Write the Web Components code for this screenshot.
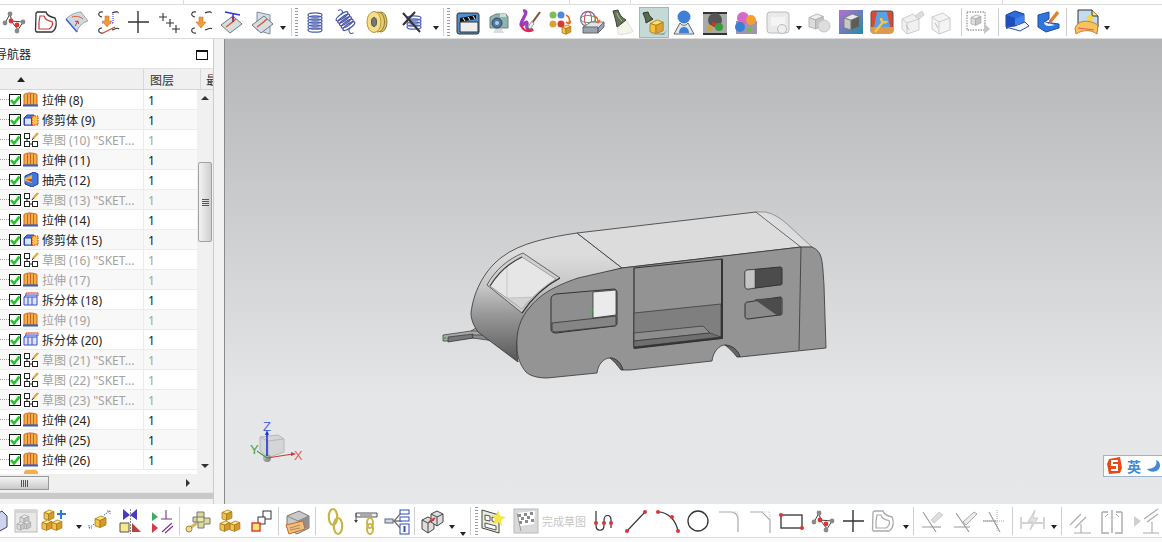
<!DOCTYPE html>
<html lang="zh"><head><meta charset="utf-8"><title>NX</title>
<style>html,body{margin:0;padding:0;width:1162px;height:542px;overflow:hidden;background:#f5f6f7;font:12px "Noto Sans","Noto Sans CJK SC",sans-serif}</style>
</head><body>
<app-shell></app-shell>
<script>
const cube=(x,y,s,c1='#ffe680',c2='#f3c24a',c3='#d89a26',st='#a77a20')=>{const h=s*.45;return `<g stroke="${st}" stroke-width=".8" stroke-linejoin="round"><path d="M${x} ${y+h/1.6}L${x+s*.6} ${y}L${x+s*1.1} ${y+h/2.4}L${x+s*.5} ${y+h}Z" fill="${c1}"/><path d="M${x} ${y+h/1.6}L${x+s*.5} ${y+h}V${y+h+s*.7}L${x} ${y+h/1.6+s*.7}Z" fill="${c2}"/><path d="M${x+s*.5} ${y+h}L${x+s*1.1} ${y+h/2.4}V${y+h/2.4+s*.7}L${x+s*.5} ${y+h+s*.7}Z" fill="${c3}"/></g>`};
const gcube=(x,y,s)=>cube(x,y,s,'#efefef','#dcdcdc','#c4c4c4','#aaa');
const ball=(x,y,r,c)=>`<circle cx="${x}" cy="${y}" r="${r}" fill="${c}"/>`;
const dots=(pts,c='#d33',r=2)=>pts.map(p=>ball(p[0],p[1],r,c)).join('');
const heart=(c1,c2)=>`<path d="M4 5C4 4 5 3 6 3L14 3C15 7 19 8 23 9C25 13 25 20 20 23L5 23C4 23 3.500 22 3.500 21Z" fill="none" stroke="${c1}" stroke-width="1.300"/><path d="M8 7L12 7C13 10 16 12 20 12.500C21 15 20 18 17 20L7 20L7 13Z" fill="none" stroke="${c2}" stroke-width="1.200"/>`;
const tile=`<path d="M3 16L15 7L24 15L12 24Z" fill="#d8dde0" stroke="#6d7c88"/><path d="M8 18C12 15 15 13 18 10" stroke="#e0552a" stroke-width="1.3" fill="none"/>`;
const coil=(x,y,n,st='#4a5fb0')=>{let s='';for(let i=0;i<n;i++)s+=`<ellipse cx="${x}" cy="${y+i*3}" rx="7" ry="2.2" fill="none" stroke="${st}" stroke-width="1.3"/>`;return s};
const sk=`<path d="M9 3C4 2 3 7 8 8M9 24C4 25 3 19 8 19M18 4C22 2 25 3 24 4M18 21C21 20 24 18 25 20" fill="none" stroke="#333" stroke-width="1.1"/>`;
const arrow=(x,y)=>`<path d="M${x-2} ${y}h4v5h3l-5 6l-5-6h3z" fill="#f09a3a" stroke="#c9661c" stroke-width=".5"/>`;
const ICONS={
nodes:`<path d="M4 14L9 5L11 13L17 21L22 13L10 12" fill="none" stroke="#444"/>`+dots([[9,5],[4,14],[16,22],[22,13]],'#888',2.4)+dots([[10,12],[16,16]],'#d33',2.4),
heart:heart('#333','#d4343a'),
surf:`<path d="M3 10C8 5 14 3 18 3L25 12C20 13 15 18 14 23C10 18 6 14 3 10Z" fill="#cfd9df" stroke="#9aa6ad"/><path d="M3 10C6 14 10 18 14 23" stroke="#3e5ed8" stroke-width="1.4" fill="none"/><path d="M9 8C13 7 16 7 20 10" stroke="#e5562a" fill="none"/><path d="M12 17l3-5M15 12l-3 .5M15 12l.5 3" stroke="#d4343a" fill="none"/>`,
curvearrow:sk+`<path d="M19 5V15" stroke="#33f" stroke-dasharray="1 1"/><path d="M8 14H19" stroke="#33f" stroke-dasharray="1 1"/><path d="M9 24L21 18" stroke="#e0352a" stroke-width="1.2"/>`+arrow(13,7),
plus:`<path d="M13 2V24M3 13H24" stroke="#333" stroke-width="1.4"/>`,
plus3:`<path d="M8 4V12M4 8H12M15 10V18M11 14H19M21 16V24M17 20H25" stroke="#333" stroke-width="1.1"/>`,
curvearrow2:sk+arrow(14,8),
tilet:tile+`<path d="M7 3L22 6M15 4.5V13" stroke="#2f36d6" stroke-width="1.4"/><path d="M15 11l-2-3h4z" fill="#c22"/>`,
tile2:`<path d="M8 3L21 6V25L8 21Z" fill="#d9dee6" stroke="#7f8ea3"/>`+tile,
coil:coil(13,6,6),
spring:`<g transform="rotate(-35 13 13)"><path d="M13 -1C18 -1 17 4 13 4" stroke="#3e5ed8" fill="none"/>${coil(13,6,5,'#4b55a8')}<path d="M13 20C8 22 10 27 13 26" stroke="#3e5ed8" fill="none"/></g>`,
roll:`<ellipse cx="17" cy="13" rx="6" ry="10" fill="#d8bf62" stroke="#8f7b35"/><ellipse cx="14" cy="13" rx="6.500" ry="10" fill="#ead174" stroke="#8f7b35"/><ellipse cx="10" cy="13" rx="7" ry="10.500" fill="#f4de88" stroke="#b5973a"/><ellipse cx="10" cy="13" rx="2.500" ry="4.500" fill="#777" stroke="#555"/>`,
coilx:coil(14,9,4,'#5264b8')+`<path d="M3 4L20 23M15 3L3 16" stroke="#333" stroke-width="2"/>`,
clap:`<rect x="3" y="4" width="22" height="21" rx="2" fill="#4d8fd0" stroke="#333"/><path d="M6 13H24V23H6Z" fill="#eee" stroke="#333"/><path d="M6 9L22 6V10L6 13Z" fill="#111"/><path d="M9 9l2 3M14 8l2 3M19 7l2 3" stroke="#fff"/>`,
camera:`<path d="M5 8L11 5H21L23 8V19H5Z" fill="#8fb3ad" stroke="#6c8580"/><circle cx="12" cy="14" r="5" fill="#4a79a8" stroke="#445"/><circle cx="12" cy="14" r="2" fill="#bcd"/><rect x="15" y="5" width="6" height="3" fill="#cdd"/><path d="M10 20H17L19 24H8Z" fill="#ddd"/>`,
ribbon:`<path d="M7 2C15 1 4 12 5 16C6 19 12 8 11 16C10 20 13 23 17 20" fill="none" stroke="#9d3bc2" stroke-width="3.2"/><path d="M5 16C6 20 10 24 17 21" fill="none" stroke="#e5264b" stroke-width="2.2"/><path d="M24 3L16 14" stroke="#7a5330" stroke-width="2"/><path d="M16 12L18 15L14 20L12 18Z" fill="#eee" stroke="#8a6"/>`,
balls:ball(6,6,3.5,'#7dc05a')+ball(14,6,3.5,'#4f87d6')+ball(6,15,3.5,'#d8a13d')+ball(14,15,3.5,'#d43c3c')+`<path d="M19 6C23 8 23 11 22 14M22 15l-3-2M22 15l2-3" stroke="#e86a2a" stroke-width="1.6" fill="none"/>`+cube(15,16,8),
wire:`<circle cx="9" cy="10" r="7.500" fill="none" stroke="#7d6fb0" stroke-width="1.300"/><ellipse cx="9" cy="10" rx="7.500" ry="3.500" fill="none" stroke="#4ca36a"/><ellipse cx="9" cy="10" rx="3.500" ry="7.500" fill="none" stroke="#d0465a"/><path d="M4 18L12 13H25L19 19Z" fill="#dfe3e8" stroke="#777"/><path d="M4 18H19V24H4ZM19 19L25 13V18L19 24Z" fill="#9aa3ad" stroke="#667"/><path d="M14 7C18 7 19 9 19 13M19 14l-3-2M19 14l2-3" stroke="#e86a2a" stroke-width="1.400" fill="none"/>`,
spot:`<path d="M9 18L17 11L24 22C20 25 12 26 9 25Z" fill="#f6f6e8" stroke="#ddd"/><path d="M4 2L9 1C10 5 13 9 17 11L8 18C7 11 5 6 4 2Z" fill="#66745a" stroke="#3a4433"/><path d="M8 4C9 8 11 10 13 12" stroke="#b8c4a0" fill="none"/>`,
lampcube:`<path d="M2 4L7 3C8 6 9 8 12 10L5 14C5 10 3 7 2 4Z" fill="#5a6d42" stroke="#333"/><path d="M6 15L13 11L12 15Z" fill="#f3ef9a"/>`+cube(9,11,12,'#ffe060','#f6c23e','#e0a030')+`<path d="M8 25L23 26L26 21L23 24Z" fill="#8fa5a0"/>`,
person:ball(13,8,6.5,'#3f7fd5')+`<path d="M9 14C11 17 15 17 17 14L23 25H3Z" fill="#dfe5ea" stroke="#666"/><path d="M8 24C8 16 18 16 18 24Z" fill="#3f7fd5"/>`,
darkbox:`<rect x="1" y="3" width="24" height="23" fill="#a9aaa8"/><rect x="1" y="3" width="24" height="2" fill="#333"/><rect x="1" y="24" width="24" height="2" fill="#333"/><circle cx="13" cy="11" r="7" fill="#555"/>`+ball(8,19,3,'#c9a23a')+ball(12,15,2.2,'#c33')+ball(17,18,4,'#3c9a3c'),
colorballs:`<path d="M4 12H25V25H4Z" fill="#a094b5"/>`+ball(11,9,6,'#d568c8')+ball(19,11,5,'#f0a030')+ball(8,18,5,'#3a80d0')+ball(18,21,2.5,'#6cc040'),
greybox:`<rect x="2" y="3" width="22" height="21" rx="3" fill="#e9e9e9" stroke="#bbb"/><rect x="6" y="8" width="14" height="9" fill="#f4f4f4"/><circle cx="17" cy="20" r="4.5" fill="#eee" stroke="#bbb"/>`,
greycube:gcube(2,5,13)+`<circle cx="17" cy="17" r="6" fill="#ddd" stroke="#c4c4c4"/>`,
tealcube:`<defs><linearGradient id="g" x1="0" y1="0" x2="1" y2="1"><stop offset="0" stop-color="#b56fd0"/><stop offset="1" stop-color="#1d8fa8"/></linearGradient></defs><rect x="1" y="1" width="24" height="24" fill="url(#g)"/>`+cube(6,5,14,'#e6e8e4','#c7cac4','#5b5e58','#777'),
stage:`<rect x="2" y="2" width="22" height="22" rx="2" fill="#d94a34" stroke="#555"/><path d="M8 3H18L21 18H5Z" fill="#5aa0e8"/><path d="M2 18H24V24H2Z" fill="#dd9a4c"/><path d="M6 23L14 13M12 9C12 14 17 14 18 12" stroke="#f0c850" stroke-width="2.4" fill="none"/>`,
wirecam:`<g fill="#f0f0f0" stroke="#ccc"><path d="M3 10L14 5L20 10V21L8 25L3 20Z"/><path d="M3 10L8 14L20 10M8 14V25"/><path d="M16 7L23 2L25 6L20 10Z" fill="#ddd"/></g><path d="M7 16l3 5" stroke="#bbb"/>`,
wirebox:`<g fill="#f4f4f4" stroke="#ccc"><path d="M4 8L15 4L22 9V21L11 25L4 20Z"/><path d="M4 8L11 13L22 9M11 13V25"/></g><path d="M7 14l3 5" stroke="#bbb"/>`,
dotbox:`<rect x="2" y="3" width="18" height="18" fill="none" stroke="#999" stroke-dasharray="1.4 1.2" stroke-width="1.4"/>`+gcube(6,6,9)+`<path d="M19 17L25 23L19 28Z" fill="#c6c6c6" transform="translate(0 -3)"/>`,
blueL:`<path d="M3 6L12 2L21 5V13L13 15V17L3 18Z" fill="#2f6bd8" stroke="#143f98"/><path d="M3 6L12 9V17L3 20Z" fill="#1c4fb8"/><path d="M12 10L21 6V13L12 16Z" fill="#3f83ea"/><path d="M12 17L22 13L26 17L17 22L3 18Z" fill="#f4f7ff" stroke="#2c4ea8"/>`,
bluepen:`<path d="M3 6L14 3V10L9 13L24 15V19L11 23L3 18Z" fill="#2f75dc" stroke="#1d4fa8"/><path d="M9 13C9 17 13 18 20 16" fill="#e8f2ff"/><path d="M23 3L15 13" stroke="#d9862a" stroke-width="3.5"/><path d="M16 11L13 15" stroke="#d44"/>`,
docfold:`<path d="M4 1H18L24 7V18H4Z" fill="#c5dbec" stroke="#333"/><path d="M18 1V7H24" fill="#ffe070" stroke="#333"/><circle cx="16" cy="9" r="3" fill="#f5d640"/><path d="M1 19C4 11 14 10 24 16L23 25C16 20 8 21 2 25Z" fill="#f5c45a" stroke="#c74"/><path d="M4 19L20 21" stroke="#e55"/>`,
hexpart:`<path d="M-4 8L5 3L10 8V19L1 24L-5 18Z" fill="#cfd4ee" stroke="#445"/>`,
greybig:`<rect x="2" y="2" width="22" height="22" fill="#e8e8e8" stroke="#bbb"/><rect x="2" y="2" width="22" height="3" fill="#d4d4d4"/>`+gcube(7,7,8)+gcube(10,13,7)+gcube(4,14,7),
cubeplus:cube(2,2,9)+cube(0,12,9)+cube(10,12,9)+`<path d="M19 2V11M15 6H24" stroke="#2f7ad6" stroke-width="2"/>`,
cubemove:cube(9,8,10)+`<path d="M18 7L24 3M21 3h3v3M3 20l5-4M3 17v3h3" stroke="#3a66c8" stroke-dasharray="1.5 1" fill="none"/>`,
mirror:`<path d="M6 1L13 7L6 12ZM20 1L13 7L20 12Z" fill="#4a3bc4"/><path d="M3 15H12V24H3Z" fill="#f5e98a" stroke="#555"/><path d="M15 15L24 24H15Z" fill="#b8403e"/><path d="M13.500 1V26" stroke="#888" stroke-dasharray="2 1"/>`,
trimline:`<path d="M4 4L10 9L4 13Z" fill="#3eaa5e"/><path d="M4 15L10 20L4 25Z" fill="#cf3d4b"/><path d="M18 2V11M13 11H24M14 24L24 15M17 25L25 18" stroke="#7a3285" stroke-width="1.1"/>`,
keycube:`<path d="M2 22L12 15" stroke="#d8b460" stroke-width="3"/><circle cx="4" cy="21" r="3" fill="#f2d98c" stroke="#a8873a"/><path d="M12 4H19V10H25V16H19V20H13V14H8V9H12Z" fill="#d9d9a0" stroke="#777"/><path d="M12 9H19V14H12Z" fill="#f1e7a2" stroke="#777"/>`,
cubes3:cube(5,2,9)+cube(3,13,9)+cube(13,13,9),
squares:`<rect x="14" y="3" width="8" height="8" fill="#fff" stroke="#333"/><rect x="9" y="9" width="7" height="7" fill="#fff" stroke="#333"/><rect x="3" y="15" width="8" height="8" fill="#f7e770" stroke="#d33" stroke-width="1.4"/>`,
grayfile:`<path d="M3 8L15 3L25 8V20L13 26L3 20Z" fill="#c9c9c9" stroke="#777"/><path d="M3 8L14 13L25 8M14 13V20" fill="none" stroke="#888"/><path d="M14 13L25 8V20L14 22Z" fill="#8f8f8f"/><path d="M2 17L19 13L21 21L5 26Z" fill="#f0c078" stroke="#c9682c"/><path d="M6 20l10-3M6 22l10-2" stroke="#a86"/>`,
chain:`<g fill="none" stroke="#c7b545" stroke-width="2.2"><ellipse cx="10" cy="9" rx="4.2" ry="8"/><ellipse cx="15" cy="18" rx="4.2" ry="8"/></g>`,
chainbar:`<path d="M3 5H24V9H3ZM3 5V14" fill="#eee" stroke="#555"/><path d="M3 15l-2-3h4z" fill="#444"/><rect x="7" y="6" width="12" height="2" fill="#aaa"/><g fill="none" stroke="#c7b545" stroke-width="2"><ellipse cx="17" cy="15" rx="3" ry="5"/><ellipse cx="17" cy="21" rx="3" ry="5"/></g>`,
infotree:`<path d="M2 13H10L18 4M10 13L18 13M10 13L18 22" stroke="#777" stroke-width="1.3" fill="none"/><rect x="1" y="11" width="8" height="4" fill="#c8d6e8" stroke="#667"/><rect x="16" y="2" width="9" height="4" fill="#fff" stroke="#334fa8"/><rect x="16" y="9" width="9" height="4" fill="#fff" stroke="#334fa8"/><rect x="16" y="16" width="9" height="10" fill="#fff" stroke="#334fa8"/><rect x="19.500" y="18" width="2" height="6" fill="#334fa8"/>`,
ccube:`<g fill="#ddd" stroke="#444"><path d="M3 12L9 9L15 12V21L9 25L3 21Z"/><path d="M12 6L18 3L24 6V14L18 18L12 14Z"/><path d="M3 12L9 15L15 12M9 15V25M12 6L18 9L24 6M18 9V18" fill="none"/></g><path d="M10 14L16 10" stroke="#d33" stroke-width="2"/>`,
sketchnew:`<path d="M3 2L20 7V25L3 20Z" fill="#e8ecd8" stroke="#444"/><path d="M6 7L11 8V13L6 12ZM13 9L17 10V14L13 13ZM6 15L17 18V22L6 19Z" fill="#fff" stroke="#555"/><path d="M19 2L21 8L27 9L22 12L23 18L19 14L14 16L16 11L12 7L17 8Z" fill="#f5e642"/>`,
flag:`<rect x="1" y="1" width="24" height="24" fill="#d9d9d9" stroke="#bbb"/><path d="M4 5L22 3L21 16L7 18Z" fill="#fff"/><path d="M5 6h3v3H5zM11 5h3v3h-3zM17 4h3v3h-3zM8 9h3v3H8zM14 8h3v3h-3zM6 13h3v3H6zM12 12h3v3h-3zM18 11h3v3h-3z" fill="#8b8b8b"/><path d="M4 5L8 23" stroke="#999"/>`,
studio:`<path d="M5 3V17C5 24 13 24 13 17V12C13 6 20 6 20 12V20" fill="none" stroke="#333" stroke-width="1.200"/>`+dots([[5,15],[13,15],[20,15]]),
line:`<path d="M4 23L22 4" stroke="#333" stroke-width="1.1"/>`+dots([[4,23],[22,4]]),
arc:`<path d="M3 4C14 4 21 13 23 23" fill="none" stroke="#333" stroke-width="1.2"/>`+dots([[3,4],[17,9],[23,23]]),
circle:`<circle cx="13" cy="13" r="10" fill="none" stroke="#333" stroke-width="1.3"/>`,
fillet:`<path d="M3 4H15C19 4 22 7 22 11V24" fill="none" stroke="#aaa" stroke-width="1.2"/><path d="M15 4H22V11" stroke="#ccc" stroke-dasharray="1 1" fill="none"/>`,
chamfer:`<path d="M3 4H15L23 12V25" fill="none" stroke="#aaa" stroke-width="1.2"/><path d="M15 4H23V12" stroke="#ccc" stroke-dasharray="1 1" fill="none"/>`,
rect:`<rect x="2" y="7" width="21" height="13" fill="none" stroke="#333" stroke-width="1.3"/>`+dots([[2,7],[23,20]]),
heartg:heart('#aaa','#aaa'),
trim1:`<path d="M4 4L17 24M3 19H22" stroke="#999" stroke-width="1.1"/><path d="M12 12L20 4L24 7L15 15Z" fill="#dedede" stroke="#ccc"/><path d="M15 19h8" stroke="#bbb" stroke-dasharray="1 1"/>`,
trim2:`<path d="M4 5L17 24M2 19H18" stroke="#999" stroke-width="1.1"/><path d="M11 14L22 4L25 6L14 17Z" fill="#ececec" stroke="#aaa"/>`,
trim3:`<path d="M3 13H24M17 2V24" stroke="#aaa" stroke-width="1" stroke-dasharray="1 1"/><path d="M3 13H16M9 4L20 24" stroke="#999" stroke-width="1.1"/>`,
dim:`<path d="M2 9V21M25 9V21M3 15H24" stroke="#aaa"/><path d="M16 2L9 14H14L11 22L19 10H14Z" fill="#e1e1e1" stroke="#ccc"/>`,
para:`<path d="M3 17L14 6M8 20L19 9M14 16V25M7 25H24" stroke="#aaa" stroke-width="1.1"/>`,
sym:`<path d="M3 4V25H10M23 4V25H16M3 4H9M23 4H17M13 2V25" stroke="#aaa" stroke-width="1.4" fill="none"/><path d="M9 6L6 9M17 6L20 9" stroke="#aaa"/>`,
perp:`<path d="M2 8L9 13L2 19Z" fill="#cfcfcf"/><path d="M12 11L26 1M15 14L26 6M20 14V25M11 25H27" stroke="#aaa" stroke-width="1.1"/>`,
};
class ToolIcon extends HTMLElement{
  connectedCallback(){
    const r=this.attachShadow({mode:'open'});
    const w=+this.getAttribute('w')||26;
    const hl=this.hasAttribute('hl');
    r.innerHTML=`<style>:host{display:flex;flex:none;width:${w}px;height:26px;align-items:center;justify-content:center;position:relative}
    svg{display:block;overflow:visible;position:relative}
    ${hl?':host::before{content:"";position:absolute;inset:-2px -2px -3px -2px;background:#c5d9d6;border:1px solid #9db9b5}':''}</style>
    <svg width="26" height="26" viewBox="0 0 26 26">${ICONS[this.getAttribute('name')]||''}</svg>`;
  }
}
customElements.define('tool-icon',ToolIcon);
class ToolBar extends HTMLElement{
  connectedCallback(){
    const r=this.attachShadow({mode:'open'});
    const items=JSON.parse(this.getAttribute('items'));
    let x=0,h='';
    for(const it of items){
      const [k,c,extra]=it; let w=k==='|'?2:k==='v'?6:k==='g'?3:k==='t'?46:26;
      const ml=(c-w/2)-x; x=c+w/2;
      const st=`margin-left:${ml}px`;
      if(k==='|')h+=`<i class="sep" style="${st}"></i>`;
      else if(k==='v')h+=`<i class="drop" style="${st};${extra?`transform:translateY(${extra}px)`:''}"></i>`;
      else if(k==='g')h+=`<i class="grip" style="${st}"></i>`;
      else if(k==='t')h+=`<span class="txt" style="${st}">完成草图</span>`;
      else h+=`<tool-icon name="${k}" ${extra?'hl':''} style="${st}"></tool-icon>`;
    }
    r.innerHTML=`<style>:host{display:flex;align-items:center;height:100%;box-sizing:border-box}
    .sep{flex:none;width:1px;margin-right:1px;height:28px;background:#cfcfcf}
    .drop{flex:none;width:0;height:0;border:3px solid transparent;border-top:4px solid #222;border-bottom:0;margin-top:12px}
    .grip{flex:none;width:3px;height:28px;background:repeating-linear-gradient(#9b9b9b 0 1px,transparent 1px 3px)}
    .txt{flex:none;width:46px;color:#c6c6c6;font:11px "Noto Sans CJK SC",sans-serif;text-align:center;white-space:nowrap}
    </style>${h}`;
  }
}
customElements.define('tool-bar',ToolBar);
class TreeRow extends HTMLElement{
  connectedCallback(){
    const r=this.attachShadow({mode:'open'});
    const k=this.getAttribute('kind'),off=this.hasAttribute('off');
    const ic={
     ext:`<path d="M1 2.500C4 .5 10 .5 14 2.500V13H1Z" fill="#f4ad48" stroke="#c8641c"/><path d="M4.500 2V13M7.500 1.500V13M10.500 2V13" stroke="#c8641c"/><path d="M0 12.500H15V14.500H0Z" fill="#2f5fcf"/>`,
     trim:`<path d="M1 6L4 3H11V13H1Z" fill="#4e74e0" stroke="#2a47b0"/><rect x="1.500" y="6" width="7" height="7" fill="#dce6ff" stroke="#2a47b0"/><path d="M9 4H15V13H9Z" fill="#f3c94c" stroke="#d22" stroke-dasharray="1.5 1"/>`,
     sketch:`<rect x="1.500" y="1.500" width="5" height="5" fill="#fff" stroke="#222"/><rect x="1.500" y="9.500" width="5" height="5" fill="#fff" stroke="#222"/><rect x="9.500" y="9.500" width="5" height="5" fill="#fff" stroke="#222"/><path d="M4 6.500V9.500M6.500 12H9.500" stroke="#222" fill="none"/><path d="M15 1L10 6.500" stroke="#e7a625" stroke-width="2.200"/><path d="M10.500 6L9 8" stroke="#222"/>`,
     shell:`<path d="M2 4L11 0L15 2V12L9 15L2 12Z" fill="#4676d8" stroke="#1d3f9c"/><path d="M2 6L9 3V11L2 9Z" fill="#f2b33f"/><path d="M9 7L3 7.500L9 10Z" fill="#d7381f"/>`,
     split:`<path d="M1 5L3 3H14V13H1Z" fill="#dfe6ff" stroke="#3a4fcc"/><path d="M1 5H14M5 5V13M9 5V13" stroke="#3a4fcc"/><path d="M3 3V1H15V4" stroke="#d7381f" fill="none"/>`
    }[k];
    r.innerHTML=`<style>:host{display:flex;height:20px;box-sizing:border-box;background:${this.hasAttribute('alt')?'#f8f8f8':'#fff'};border-bottom:1px solid #ececec;color:${off?'#a2a2a2':'#222'};font:12px/19px "Noto Sans","Noto Sans CJK SC",sans-serif;white-space:nowrap}
    .a{width:144px;display:flex;align-items:center;flex:none;box-sizing:border-box;border-right:1px solid #ececec}
    .d{width:9px;height:1px;flex:none;background:repeating-linear-gradient(90deg,#999 0 1px,transparent 1px 2px)}
    .c{width:12px;height:12px;flex:none;box-sizing:border-box;border:1px solid #111;background:#fff;position:relative}
    .c svg{position:absolute;left:-1px;top:-1px}
    .i{flex:none;margin:0 3px 0 2px;display:block}
    .t{margin-top:2px}
    .b{flex:1;padding:1px 0 0 4px;color:${off?'#a2a2a2':'#222'}}</style>
    <div class="a"><span class="d"></span><span class="c"><svg width="12" height="12" viewBox="0 0 12 12"><path d="M2 6L5 9.500L10.500 2.500" fill="none" stroke="#1fc52a" stroke-width="2.6"/></svg></span><svg class="i" width="16" height="15" viewBox="0 0 16 15">${ic}</svg><span class="t"><slot></slot></span></div><div class="b">1</div>`;
  }
}
customElements.define('tree-row',TreeRow);
class NavPanel extends HTMLElement{
  connectedCallback(){
    const r=this.attachShadow({mode:'open'});
    const rows=[['ext','拉伸 (8)'],['trim','修剪体 (9)'],['sketch','草图 (10) "SKET...',1],['ext','拉伸 (11)'],['shell','抽壳 (12)'],['sketch','草图 (13) "SKET...',1],['ext','拉伸 (14)'],['trim','修剪体 (15)'],['sketch','草图 (16) "SKET...',1],['ext','拉伸 (17)',1],['split','拆分体 (18)'],['ext','拉伸 (19)',1],['split','拆分体 (20)'],['sketch','草图 (21) "SKET...',1],['sketch','草图 (22) "SKET...',1],['sketch','草图 (23) "SKET...',1],['ext','拉伸 (24)'],['ext','拉伸 (25)'],['ext','拉伸 (26)']];
    r.innerHTML=`<style>:host{display:flex;flex-direction:column;width:225px;flex:none;box-sizing:border-box;background:#fff;border-right:1px solid #8a8a8a;height:100%;font:12px "Noto Sans CJK SC",sans-serif;color:#222;overflow:hidden}
    .inner{display:flex;flex-direction:column;flex:1;width:214px;box-sizing:border-box;border-right:1px solid #ccc;min-height:0}
    .wrap{display:flex;flex:1;min-height:0}
    .title{height:29px;display:flex;align-items:center;justify-content:space-between;padding:0 5px 0 0;box-sizing:border-box}
    .title span{margin-left:-5px;font-size:12px;margin-top:-1px}
    .max{width:12px;height:10px;border:1px solid #111;border-top-width:2px;box-sizing:border-box;margin-top:2px}
    .head{height:22px;display:flex;background:#f0f0f0;border-top:1px solid #e2e2e2;border-bottom:1px solid #d5d5d5;box-sizing:border-box;color:#333;overflow:hidden}
    .head>div{box-sizing:border-box;border-right:1px solid #d8d8d8;display:flex;align-items:center}
    .h1{width:144px;padding-left:17px}.tri{width:0;height:0;border:4.5px solid transparent;border-top:0;border-bottom:5px solid #222}
    .h2{width:57px;padding-left:6px}.h3{flex:1;padding-left:5px;border:0!important;white-space:nowrap;overflow:hidden}
    .body{display:flex;height:384px;overflow:hidden}
    .list{width:197px;flex:none;overflow:hidden;height:384px}
    .stub{height:4px;display:flex;padding-left:24px;overflow:hidden}
    .stub i{width:14px;height:4px;background:#f4ad48;border-radius:3px 3px 0 0}
    .vs{width:16px;flex:none;background:#f0f0f0;display:flex;flex-direction:column;align-items:center;position:relative}
    .ar{width:0;height:0;border:4px solid transparent}
    .up{border-top:0;border-bottom:4px solid #333;margin-top:6px}
    .dn{border-bottom:0;border-top:4px solid #333;margin-top:auto;margin-bottom:6px}
    .thumb{position:absolute;top:72px;left:1px;width:14px;height:80px;box-sizing:border-box;border:1px solid #a0a0a0;border-radius:2px;background:linear-gradient(90deg,#f2f2f2,#cfcfcf);display:flex;align-items:center;justify-content:center}
    .lines{width:7px;height:7px;background:repeating-linear-gradient(#555 0 1px,transparent 1px 2px)}
    .hs{height:18px;background:#f0f0f0;display:flex;align-items:center;position:relative;flex:none}
    .hthumb{width:49px;height:14px;box-sizing:border-box;border:1px solid #999;border-left:0;background:linear-gradient(#f4f4f4,#c9c9c9);display:flex;align-items:center;justify-content:center}
    .hlines{width:7px;height:7px;background:repeating-linear-gradient(90deg,#555 0 1px,transparent 1px 2px)}
    .rt{position:absolute;left:186px;top:5px;width:0;height:0;border:4px solid transparent;border-right:0;border-left:4px solid #333}
    .bar{height:6px;background:#c9c9c9;flex:none;border-top:1px solid #e8e8e8}
    .foot{height:5px;background:#f2f2f2;flex:none}
    .gut{flex:1;background:#f2f2f2}</style>
    <div class="wrap"><div class="inner">
      <div class="title"><span>导航器</span><i class="max"></i></div>
      <div class="head"><div class="h1"><i class="tri"></i></div><div class="h2">图层</div><div class="h3">最</div></div>
      <div class="body"><div class="list">${rows.map((x,i)=>`<tree-row kind="${x[0]}" ${x[2]?'off':''} ${i%2?'alt':''}>${x[1]}</tree-row>`).join('')}<div class="stub"><i></i></div></div>
      <div class="vs"><i class="ar up"></i><div class="thumb"><i class="lines"></i></div><i class="ar dn"></i></div></div>
      <div class="hs"><div class="hthumb"><i class="hlines"></i></div><i class="rt"></i></div>
      <div class="bar"></div><div class="foot"></div>
    </div><div class="gut"></div></div>`;
  }
}
customElements.define('nav-panel',NavPanel);
class ImeBadge extends HTMLElement{
  connectedCallback(){
    const r=this.attachShadow({mode:'open'});
    r.innerHTML=`<style>:host{position:absolute;right:-1px;top:416px;width:60px;height:22px;box-sizing:border-box;border:1px solid #9db4cf;background:#fff;display:flex;align-items:center;font:bold 14px "Noto Sans CJK SC",sans-serif;color:#3f8ad8;overflow:hidden}
    b{font-weight:700;margin-left:3px}svg{display:block;flex:none}</style>
    <svg width="18" height="20" viewBox="0 0 18 20" style="margin-left:2px"><path d="M3 3L14 1L16 12L14 17L3 18L1 8Z" fill="#e84a16"/><path d="M12 5H6V9H11V14H5" fill="none" stroke="#fff" stroke-width="2"/></svg>
    <b>英</b>
    <svg width="16" height="14" viewBox="0 0 16 14" style="margin-left:5px"><path d="M10 1C12 6 8 10 1 10C4 14 13 14 14 7C14 4 13 2 10 1Z" fill="#3f8ad8"/></svg>`;
  }
}
customElements.define('ime-badge',ImeBadge);
class CadModel extends HTMLElement{
  connectedCallback(){
    const r=this.attachShadow({mode:'open'});
    r.innerHTML=`<style>:host{position:absolute;left:0;top:0;width:938px;height:465px;display:block}svg{display:block;overflow:visible}text{font:13px "Liberation Sans",sans-serif}</style>
<svg width="938" height="465" viewBox="225 39 938 465">
<defs>
<linearGradient id="shell" gradientUnits="userSpaceOnUse" x1="505" y1="255" x2="505" y2="362"><stop offset="0" stop-color="#dcdcdc"/><stop offset=".3" stop-color="#c6c6c6"/><stop offset=".55" stop-color="#999"/><stop offset=".8" stop-color="#757575"/><stop offset="1" stop-color="#565656"/></linearGradient>
<linearGradient id="fil" gradientUnits="userSpaceOnUse" x1="790" y1="215" x2="770" y2="240"><stop offset="0" stop-color="#d2d4d6"/><stop offset="1" stop-color="#e8e8e8"/></linearGradient>
<linearGradient id="ball" x1="0" y1="0" x2="1" y2="1"><stop offset="0" stop-color="#cfcfcf"/><stop offset="1" stop-color="#777"/></linearGradient>
</defs>
<g stroke="#333" stroke-width=".8" stroke-linejoin="round">
<g stroke-width=".7"><path d="M471 331L484 323L487 327L476 334Z" fill="#aaa"/><path d="M443 335L471 331L495 331L496 335L473 338L448 341L443 341Z" fill="#a8a8a8"/><path d="M448 337L473 334V338L448 342Z" fill="#777"/><path d="M472 335L495 335L504 337V343L494 341L473 338Z" fill="#8c8c8c"/><path d="M495 335L504 337V343L495 339Z" fill="#666"/></g>
<path d="M444 338h2" stroke="#2c2" stroke-width="2"/>
<path d="M471 313C473 295 482 272 502 257C520 243 550 237 577 233L622 268L600 274C560 282 530 300 521 325C516 338 516 350 518 362L478 332C474 326 471 320 471 313Z" fill="url(#shell)"/>
<path d="M577 233L756 212L801 247L622 268Z" fill="#dcdcdc"/>
<path d="M756 212L766 212C774 214 780 218 786 223L812 247H801Z" fill="url(#fil)" stroke-width=".4"/>
<path d="M517 347C516 332 520 318 530 307C540 295 552 287 578 278L622 268L801 247L812 247C817 249 820 253 821 257C823 264 823 272 824 285L826 348L740 357C738 350 733 346 725 345C719 345 713 352 712 361L630 370L623 370C621 363 616 358 610 358C604 358 598 364 597 373L547 378C538 378 530 376 526 372C520 365 517 356 517 347Z" fill="#949494"/>
<path d="M725 345C733 346 738 350 740 357L737 357C733 352 729 348 725 345Z" fill="#666"/>
<path d="M610 358C616 358 621 363 623 370L621 370C617 365 614 361 610 358Z" fill="#666"/>
<path d="M801 247L799 350" fill="none"/>
<path d="M487 285C495 270 508 259 523 253L560 278C545 286 532 298 522 313Z" fill="#cfcfcf" stroke-width=".7"/>
<path d="M490 286C498 273 509 263 522 257L556 279C543 287 531 298 522 309Z" fill="#e6e6e6" stroke="#8d8d8d" stroke-width=".8"/>
<path d="M507 266V298L522 309C526 303 532 297 535 297L507 298" fill="#d3d3d3" stroke="#aaa" stroke-width=".5"/>
<path d="M490 286C498 273 509 263 522 257" fill="none" stroke="#444" stroke-width="1.300"/>
<path d="M522 313C532 298 545 286 560 278" fill="none" stroke="#333" stroke-width="1.200"/>
<path d="M551 299C551 296 553 295 556 294L614 289C616 289 617 291 617 293V323C617 325 616 326 614 326L556 333C553 333 551 332 551 329Z" fill="#8e8e8e" stroke-width="1"/>
<path d="M593 292L616 290V315L593 318Z" fill="#ebebeb" stroke-width=".8"/>
<path d="M552 323L616 316V324C616 325 615 326 613 326L556 332C553 332 552 331 552 329Z" fill="#858585"/>
<path d="M590 310h3" stroke="#2c2" stroke-width="1"/>
<path d="M634 268L722 259V338L634 348Z" fill="#939393" stroke-width="1.200"/>
<path d="M634 313L721 304V337L634 347Z" fill="#7f7f7f" stroke-width=".7"/>
<path d="M634 333L703 326L710 333L634 341Z" fill="#8d8d8d" stroke-width=".7"/>
<path d="M634 341L710 333L721 337L634 347Z" fill="#6f6f6f" stroke-width=".6"/>
<path d="M722 259V338L634 348" fill="none" stroke="#333" stroke-width="2"/>
<path d="M661 331h2" stroke="#2c2" stroke-width=".6"/>
<path d="M748 270L780 267C782 267 782 268 782 270V283C782 285 781 285 779 285L748 289C746 289 745 288 745 286V273C745 271 746 270 748 270Z" fill="#4c4c4c" stroke-width="1"/>
<path d="M748 270L755 269.500V288L748 289C746 289 745 288 745 286V273C745 271 746 270 748 270Z" fill="#c4c4c4" stroke-width=".5"/>
<path d="M748 302L780 297C782 297 782 298 782 300V313C782 315 781 315 779 315L748 319C746 319 745 318 745 316V305C745 303 746 302 748 302Z" fill="#8a8a8a" stroke-width="1"/>
<path d="M755 299.500L781 297.500V315L777 315Z" fill="#4c4c4c" stroke-width=".3"/>
</g>
<g fill="none" stroke="#b8b8b8"><path d="M260 437L278 435L284 439V452L267 458L260 450Z" fill="#d4d5d7"/><path d="M260 437L268 441L284 439M268 441V458"/></g>
<circle cx="267" cy="458" r="4" fill="url(#ball)"/>
<path d="M267 456V434" stroke="#1f35d8" stroke-width="1.600"/><path d="M267 430l-2 5h4z" fill="#1f35d8"/>
<path d="M267 458L257 451" stroke="#3aa53a" stroke-width="1.200"/>
<path d="M267 458L293 454" stroke="#c83a3a" stroke-width="1.200"/><path d="M296 454l-5-2v4z" fill="#c83a3a"/>
<text x="263" y="431" fill="#5068e0">Z</text><text x="250" y="454" fill="#3aa53a">Y</text><text x="294" y="460" fill="#e06060">X</text>
</svg>`;
  }
}
customElements.define('cad-model',CadModel);
class CadViewport extends HTMLElement{
  connectedCallback(){
    const r=this.attachShadow({mode:'open'});
    r.innerHTML=`<style>:host{flex:1;position:relative;display:block;overflow:hidden;background:linear-gradient(#b4b5b7 0,#e5e6e8 360px,#e6e7e9 100%)}</style><slot></slot>`;
  }
}
customElements.define('cad-viewport',CadViewport);
const TOP=[['nodes',14],['heart',45],['surf',76],['curvearrow',107],['plus',138],['plus3',168],['curvearrow2',200],['tilet',231],['tile2',262],['v',283],['|',292],['g',296],['coil',315],['spring',346],['roll',377],['coilx',413],['v',436],['|',444],['g',448],['clap',467],['camera',498],['ribbon',529],['balls',560],['wire',592],['spot',622],['lampcube',654,1],['person',684],['darkbox',715],['colorballs',745],['greybox',778],['v',799],['greycube',820],['tealcube',851],['stage',882],['wirecam',912],['wirebox',941],['|',962],['dotbox',978],['|',999],['blueL',1016],['bluepen',1048],['|',1067],['docfold',1087],['v',1107]];
const BOT=[['hexpart',10],['greybig',26],['cubeplus',55],['v',79],['cubemove',99],['mirror',130],['trimline',161],['|',180],['keycube',198],['cubes3',230],['squares',262],['|',279],['grayfile',297],['|',316],['chain',336],['chainbar',366],['infotree',397],['|',415],['ccube',432],['v',452],['v',463,7],['|',471],['g',476],['sketchnew',492],['flag',526],['t',564],['studio',604],['line',636],['arc',668],['circle',698],['fillet',729],['chamfer',760],['rect',792],['nodes',823],['plus',853],['heartg',882],['v',906],['|',914],['trim1',932],['trim2',965],['trim3',993],['|',1013],['dim',1032],['v',1054],['|',1062],['para',1080],['sym',1112],['perp',1145]];
class AppShell extends HTMLElement{
  connectedCallback(){
    const r=this.attachShadow({mode:'open'});
    r.innerHTML=`<style>:host{display:flex;flex-direction:column;width:1162px;height:542px;overflow:hidden}
    .strip{height:5px;flex:none;display:flex;background:#fff;border-bottom:1px solid #dcdcdc;box-sizing:border-box}
    .strip i{flex:none;height:4px;border-right:1px solid #dcdcdc;box-sizing:border-box}
    .tb{height:34px;flex:none;background:#fff;border-bottom:1px solid #dcdcdc;box-sizing:border-box}
    .mid{flex:1;display:flex;min-height:0}
    .bt{height:38px;flex:none;background:#fafafa;box-sizing:border-box}
    .bin{height:34px;background:#fff;border-bottom:1px solid #dcdcdc;box-sizing:border-box;overflow:hidden}
    </style>
    <div class="strip"><i style="width:184px"></i><i style="width:386px"></i><i style="width:61px"></i><i style="width:372px"></i></div>
    <div class="tb"><tool-bar items='${JSON.stringify(TOP)}'></tool-bar></div>
    <div class="mid"><nav-panel></nav-panel><cad-viewport><cad-model></cad-model><ime-badge></ime-badge></cad-viewport></div>
    <div class="bt"><div class="bin"><tool-bar items='${JSON.stringify(BOT)}'></tool-bar></div></div>`;
  }
}
customElements.define('app-shell',AppShell);
</script>
</body></html>
